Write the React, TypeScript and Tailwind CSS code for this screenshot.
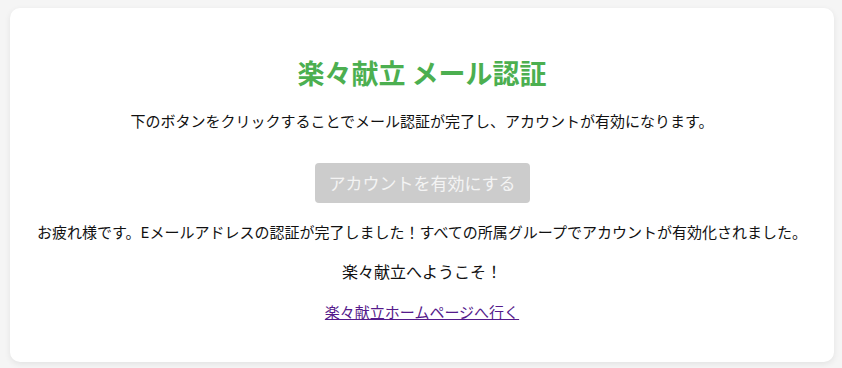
export default function App() {
  return (
    <div className="min-h-[368px] bg-[#f5f5f5] pl-[10px] pr-[8px] pt-[8px] font-['Noto_Sans_CJK_JP',sans-serif]">
      <div className="flex h-[354px] flex-col items-center rounded-[10px] bg-white px-5 pt-[45px] text-center text-[#111] shadow-[0_2px_6px_rgba(0,0,0,0.08)]">
        <h1 className="text-[27px] font-bold leading-[40px] text-[#4caf50]">楽々献立 メール認証</h1>
        <p className="mt-4 text-[15px] leading-6">
          下のボタンをクリックすることでメール認証が完了し、アカウントが有効になります。
        </p>
        <button
          disabled
          className="mt-[30px] h-10 w-[215px] rounded bg-[#cccccc] text-[17px] text-[#f4f4f4]"
        >
          アカウントを有効にする
        </button>
        <p className="mt-[17px] text-[15px] leading-6">
          お疲れ様です。Eメールアドレスの認証が完了しました！すべての所属グループでアカウントが有効化されました。
        </p>
        <p className="mt-[14px] text-[16px] leading-[26px]">楽々献立へようこそ！</p>
        <a href="#" className="mt-4 text-[15px] leading-6 text-[#551a8b] underline">
          楽々献立ホームページへ行く
        </a>
      </div>
    </div>
  );
}
